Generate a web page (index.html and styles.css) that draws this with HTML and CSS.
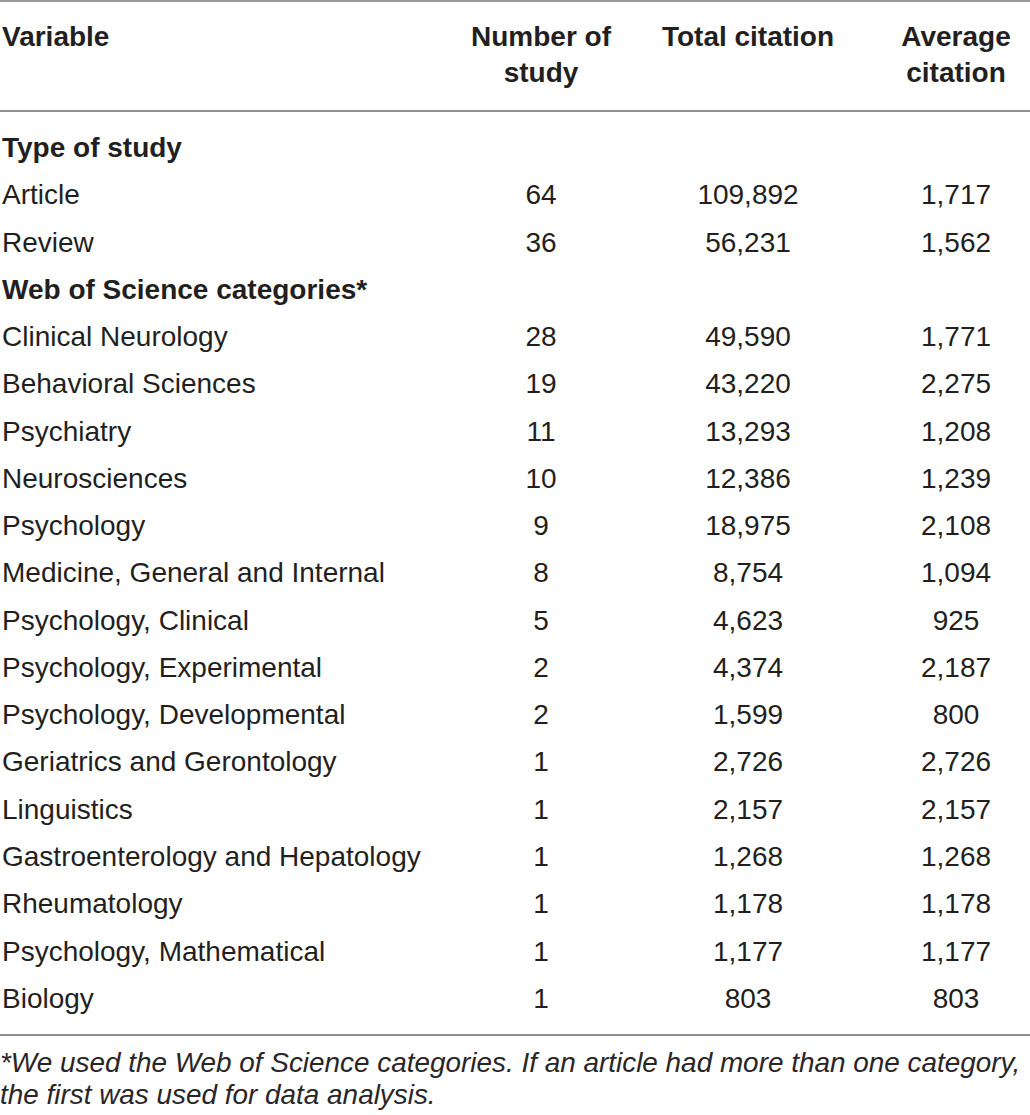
FILE: index.html
```html
<!DOCTYPE html>
<html>
<head>
<meta charset="utf-8">
<link rel="stylesheet" href="styles.css">
</head>
<body>
<div class="table">
  <div class="head">
    <div class="c1">Variable</div>
    <div class="cn">Number of<br>study</div>
    <div class="cn">Total citation</div>
    <div class="cn">Average<br>citation</div>
  </div>
  <div class="body">
    <div class="row section"><div class="c1">Type of study</div><div></div><div></div><div></div></div>
    <div class="row"><div class="c1">Article</div><div class="cn">64</div><div class="cn">109,892</div><div class="cn">1,717</div></div>
    <div class="row"><div class="c1">Review</div><div class="cn">36</div><div class="cn">56,231</div><div class="cn">1,562</div></div>
    <div class="row section"><div class="c1">Web of Science categories*</div><div></div><div></div><div></div></div>
    <div class="row"><div class="c1">Clinical Neurology</div><div class="cn">28</div><div class="cn">49,590</div><div class="cn">1,771</div></div>
    <div class="row"><div class="c1">Behavioral Sciences</div><div class="cn">19</div><div class="cn">43,220</div><div class="cn">2,275</div></div>
    <div class="row"><div class="c1">Psychiatry</div><div class="cn">11</div><div class="cn">13,293</div><div class="cn">1,208</div></div>
    <div class="row"><div class="c1">Neurosciences</div><div class="cn">10</div><div class="cn">12,386</div><div class="cn">1,239</div></div>
    <div class="row"><div class="c1">Psychology</div><div class="cn">9</div><div class="cn">18,975</div><div class="cn">2,108</div></div>
    <div class="row"><div class="c1">Medicine, General and Internal</div><div class="cn">8</div><div class="cn">8,754</div><div class="cn">1,094</div></div>
    <div class="row"><div class="c1">Psychology, Clinical</div><div class="cn">5</div><div class="cn">4,623</div><div class="cn">925</div></div>
    <div class="row"><div class="c1">Psychology, Experimental</div><div class="cn">2</div><div class="cn">4,374</div><div class="cn">2,187</div></div>
    <div class="row"><div class="c1">Psychology, Developmental</div><div class="cn">2</div><div class="cn">1,599</div><div class="cn">800</div></div>
    <div class="row"><div class="c1">Geriatrics and Gerontology</div><div class="cn">1</div><div class="cn">2,726</div><div class="cn">2,726</div></div>
    <div class="row"><div class="c1">Linguistics</div><div class="cn">1</div><div class="cn">2,157</div><div class="cn">2,157</div></div>
    <div class="row"><div class="c1">Gastroenterology and Hepatology</div><div class="cn">1</div><div class="cn">1,268</div><div class="cn">1,268</div></div>
    <div class="row"><div class="c1">Rheumatology</div><div class="cn">1</div><div class="cn">1,178</div><div class="cn">1,178</div></div>
    <div class="row"><div class="c1">Psychology, Mathematical</div><div class="cn">1</div><div class="cn">1,177</div><div class="cn">1,177</div></div>
    <div class="row"><div class="c1">Biology</div><div class="cn">1</div><div class="cn">803</div><div class="cn">803</div></div>
  </div>
  <p class="note">*We used the Web of Science categories. If an article had more than one category,<br>the first was used for data analysis.</p>
</div>
</body>
</html>
```
FILE: styles.css
```css
html, body {
  margin: 0;
  padding: 0;
  background: #ffffff;
}
body {
  font-family: "Liberation Sans", Arial, sans-serif;
  color: #231f20;
  width: 1030px;
}
.table {
  border-top: 2px solid #9a9a9a;
}
.head, .row {
  display: grid;
  grid-template-columns: 468px 146px 268px 148px;
  font-size: 28px;
}
.head {
  font-weight: bold;
  line-height: 36px;
  padding: 17px 0 19px;
  border-bottom: 2px solid #8f8f8f;
}
.c1 {
  padding-left: 2px;
  white-space: nowrap;
}
.cn {
  text-align: center;
  white-space: nowrap;
}
.body {
  padding: 12px 0 12px;
  border-bottom: 2px solid #8f8f8f;
}
.row {
  height: 47.28px;
  line-height: 47.28px;
}
.section {
  font-weight: bold;
}
.note {
  margin: 0;
  padding: 11px 0 0 0;
  font-style: italic;
  font-size: 27.9px;
  line-height: 32px;
  color: #2a2627;
  white-space: nowrap;
}
```
